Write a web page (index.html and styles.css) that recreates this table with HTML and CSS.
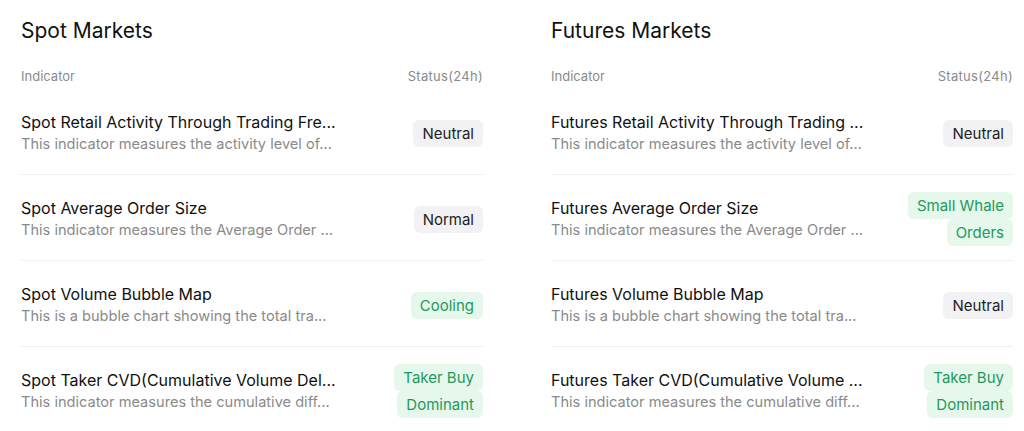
FILE: index.html
```html
<!DOCTYPE html>
<html lang="en">
<head>
<meta charset="utf-8">
<title>Markets</title>
<link rel="stylesheet" href="styles.css">
</head>
<body>
<div class="page">
  <section class="market">
    <h2 class="market-title">Spot Markets</h2>
    <div class="table-head"><span>Indicator</span><span>Status(24h)</span></div>
    <div class="row">
      <div class="info">
        <div class="name">Spot Retail Activity Through Trading Fre...</div>
        <div class="desc">This indicator measures the activity level of...</div>
      </div>
      <div class="status"><span class="badge neutral">Neutral</span></div>
    </div>
    <div class="row">
      <div class="info">
        <div class="name">Spot Average Order Size</div>
        <div class="desc">This indicator measures the Average Order ...</div>
      </div>
      <div class="status"><span class="badge neutral">Normal</span></div>
    </div>
    <div class="row">
      <div class="info">
        <div class="name">Spot Volume Bubble Map</div>
        <div class="desc">This is a bubble chart showing the total tra...</div>
      </div>
      <div class="status"><span class="badge good">Cooling</span></div>
    </div>
    <div class="row last">
      <div class="info">
        <div class="name">Spot Taker CVD(Cumulative Volume Del...</div>
        <div class="desc">This indicator measures the cumulative diff...</div>
      </div>
      <div class="status"><span class="badge good">Taker Buy Dominant</span></div>
    </div>
  </section>
  <section class="market">
    <h2 class="market-title">Futures Markets</h2>
    <div class="table-head"><span>Indicator</span><span>Status(24h)</span></div>
    <div class="row">
      <div class="info">
        <div class="name">Futures Retail Activity Through Trading ...</div>
        <div class="desc">This indicator measures the activity level of...</div>
      </div>
      <div class="status"><span class="badge neutral">Neutral</span></div>
    </div>
    <div class="row">
      <div class="info">
        <div class="name">Futures Average Order Size</div>
        <div class="desc">This indicator measures the Average Order ...</div>
      </div>
      <div class="status"><span class="badge good">Small Whale Orders</span></div>
    </div>
    <div class="row">
      <div class="info">
        <div class="name">Futures Volume Bubble Map</div>
        <div class="desc">This is a bubble chart showing the total tra...</div>
      </div>
      <div class="status"><span class="badge neutral">Neutral</span></div>
    </div>
    <div class="row last">
      <div class="info">
        <div class="name">Futures Taker CVD(Cumulative Volume ...</div>
        <div class="desc">This indicator measures the cumulative diff...</div>
      </div>
      <div class="status"><span class="badge good">Taker Buy Dominant</span></div>
    </div>
  </section>
</div>
</body>
</html>
```

FILE: styles.css
```css
* { box-sizing: border-box; }
html, body { margin: 0; padding: 0; background: #ffffff; }
body {
  font-family: Inter, "Liberation Sans", Arial, sans-serif;
  color: #111111;
  -webkit-font-smoothing: antialiased;
}
.page {
  display: grid;
  grid-template-columns: 462px 462px;
  column-gap: 68px;
  padding: 17px 0 0 21px;
}
.market-title {
  margin: 0;
  font-size: 21px;
  line-height: 28px;
  font-weight: 400;
  color: #111111;
}
.table-head {
  display: flex;
  justify-content: space-between;
  margin-top: 19px;
  height: 25px;
  line-height: 24px;
  font-size: 13px;
  color: #8a8a8a;
}
.table-head span:last-child { letter-spacing: 0.3px; }
.row {
  display: flex;
  align-items: center;
  justify-content: space-between;
  height: 86px;
  padding-top: 3px;
  border-bottom: 1px solid #efefef;
}
.row.last { border-bottom-color: transparent; }
.info {
  width: 330px;
  min-width: 0;
}
.name {
  font-size: 16px;
  line-height: 22px;
  font-weight: 400;
  color: #111111;
  white-space: nowrap;
  overflow: hidden;
  text-overflow: ellipsis;
}
.desc {
  font-size: 14.6px;
  line-height: 22px;
  color: #8a8a8a;
  white-space: nowrap;
  overflow: hidden;
  text-overflow: ellipsis;
}
.status {
  max-width: 122px;
  text-align: right;
  line-height: 26px;
}
.badge {
  display: inline;
  font-size: 15px;
  font-weight: 400;
  padding: 4px 9px;
  border-radius: 6px;
  -webkit-box-decoration-break: clone;
  box-decoration-break: clone;
}
.badge.neutral { background: #f2f2f4; color: #222222; }
.badge.good { background: #e6f7ec; color: #1e9a5a; }
```
